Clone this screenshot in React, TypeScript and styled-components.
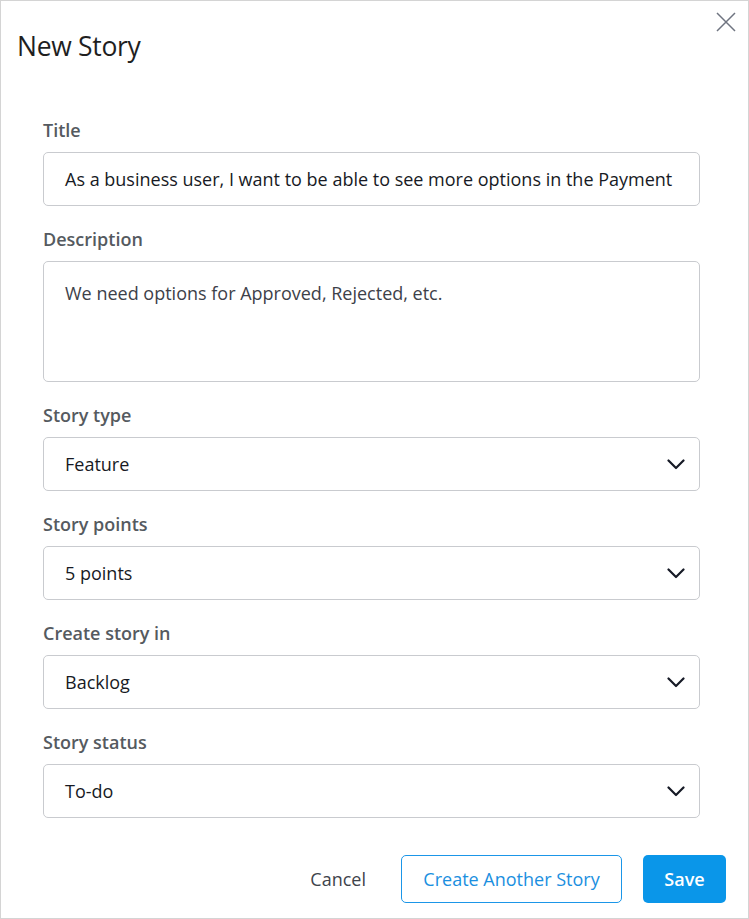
import React from "react";
import styled, { createGlobalStyle } from "styled-components";

const Global = createGlobalStyle`
  html, body { margin: 0; padding: 0; background: #fff; }
  body { font-family: "Open Sans", "Noto Sans", sans-serif; }
  * { box-sizing: border-box; }
`;

const Dialog = styled.div`
  width: 749px;
  height: 919px;
  border: 1px solid #d4d4d4;
  background: #fff;
  position: relative;
  display: flex;
  flex-direction: column;
`;

const Header = styled.div`
  padding: 27px 0 0 16px;
  height: 117px;
`;

const Title = styled.h1`
  margin: 0;
  font-size: 26.5px;
  font-weight: 400;
  color: #1f1f1f;
  line-height: 36px;
  letter-spacing: -0.3px;
`;

const Close = styled.button`
  position: absolute;
  top: 10px;
  right: 12px;
  width: 21px;
  height: 21px;
  padding: 0;
  border: none;
  background: none;
  display: flex;
  align-items: center;
  justify-content: center;
`;

const Form = styled.div`
  padding: 0 48px 0 42px;
  display: flex;
  flex-direction: column;
  gap: 21px;
`;

const Field = styled.div`
  display: flex;
  flex-direction: column;
  gap: 10px;
`;

const Label = styled.label`
  font-size: 18px;
  font-weight: 600;
  color: #555a60;
  line-height: 24px;
`;

const Box = styled.div<{ $tall?: boolean }>`
  height: ${(p) => (p.$tall ? "121px" : "54px")};
  border: 1px solid #c9cbcf;
  border-radius: 5px;
  padding: ${(p) => (p.$tall ? "19px 20px 0 21px" : "0 14px 0 21px")};
  display: flex;
  align-items: ${(p) => (p.$tall ? "flex-start" : "center")};
  justify-content: space-between;
  font-size: 18px;
  color: ${(p) => (p.$tall ? "#3d4149" : "#171a24")};
  line-height: 24px;
  white-space: nowrap;
  overflow: hidden;
`;

const Footer = styled.div`
  display: flex;
  justify-content: flex-end;
  align-items: center;
  padding: 37px 22px 0 0;
  gap: 21px;
`;

const TextButton = styled.button`
  font-family: inherit;
  font-size: 18px;
  color: #3e434b;
  background: none;
  border: none;
  padding: 0 14px 0 0;
  height: 48px;
`;

const OutlineButton = styled.button`
  font-family: inherit;
  font-size: 18px;
  color: #1b8fe0;
  background: #fff;
  border: 1px solid #1b96e8;
  border-radius: 5px;
  height: 48px;
  width: 221px;
`;

const PrimaryButton = styled.button`
  font-family: inherit;
  font-size: 18px;
  font-weight: 600;
  color: #fff;
  background: #0a96e9;
  border: none;
  border-radius: 5px;
  height: 48px;
  width: 83px;
`;

const Chevron = () => (
  <svg width="18" height="11" viewBox="0 0 18 11" fill="none">
    <path d="M1.5 1.5 L9 9 L16.5 1.5" stroke="#161a26" strokeWidth="2.2" strokeLinecap="round" strokeLinejoin="round" />
  </svg>
);

const selects = [
  { label: "Story type", value: "Feature" },
  { label: "Story points", value: "5 points" },
  { label: "Create story in", value: "Backlog" },
  { label: "Story status", value: "To-do" },
];

export default function App() {
  return (
    <>
      <Global />
      <Dialog>
        <Close aria-label="Close">
          <svg width="20" height="20" viewBox="0 0 20 20">
            <path d="M1 1 L19 19 M19 1 L1 19" stroke="#6f7480" strokeWidth="1.5" />
          </svg>
        </Close>
        <Header>
          <Title>New Story</Title>
        </Header>
        <Form>
          <Field>
            <Label>Title</Label>
            <Box>As a business user, I want to be able to see more options in the Payment</Box>
          </Field>
          <Field>
            <Label>Description</Label>
            <Box $tall>We need options for Approved, Rejected, etc.</Box>
          </Field>
          {selects.map((s) => (
            <Field key={s.label}>
              <Label>{s.label}</Label>
              <Box>
                <span>{s.value}</span>
                <Chevron />
              </Box>
            </Field>
          ))}
        </Form>
        <Footer>
          <TextButton>Cancel</TextButton>
          <OutlineButton>Create Another Story</OutlineButton>
          <PrimaryButton>Save</PrimaryButton>
        </Footer>
      </Dialog>
    </>
  );
}
